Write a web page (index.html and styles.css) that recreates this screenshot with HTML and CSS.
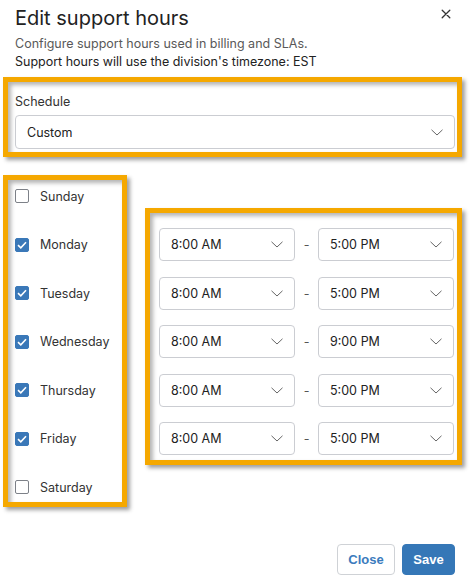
FILE: index.html
```html
<!DOCTYPE html>
<html lang="en">
<head>
<meta charset="utf-8">
<title>Edit support hours</title>
<link rel="stylesheet" href="styles.css">
</head>
<body>
<div class="dialog">
  <header class="dialog-header">
    <h1 class="dialog-title">Edit support hours</h1>
    <button class="close-btn" aria-label="Close">
      <svg width="10" height="10" viewBox="0 0 10 10"><path d="M1.2 1.2 L8.8 8.8 M8.8 1.2 L1.2 8.8" stroke="#333" stroke-width="1.3" fill="none" stroke-linecap="round"/></svg>
    </button>
  </header>
  <p class="dialog-desc"><span class="desc-muted">Configure support hours used in billing and SLAs.</span><br>Support hours will use the division's timezone: EST</p>

  <div class="field highlight hl-schedule">
    <div class="field-label">Schedule</div>
    <div class="select select-wide"><span>Custom</span><svg class="chev" width="12" height="7" viewBox="0 0 12 7"><path d="M0.5 0.8 L6 6 L11.5 0.8" stroke="#666" stroke-width="1" fill="none"/></svg></div>
  </div>

  <div class="hours">
    <div class="days highlight hl-days">
      <label class="day"><span class="cb"></span>Sunday</label>
      <label class="day"><span class="cb cb-on"><svg width="10" height="8" viewBox="0 0 10 8"><path d="M1 4.2 L3.8 6.8 L9 1.2" stroke="#fff" stroke-width="1.6" fill="none"/></svg></span>Monday</label>
      <label class="day"><span class="cb cb-on"><svg width="10" height="8" viewBox="0 0 10 8"><path d="M1 4.2 L3.8 6.8 L9 1.2" stroke="#fff" stroke-width="1.6" fill="none"/></svg></span>Tuesday</label>
      <label class="day"><span class="cb cb-on"><svg width="10" height="8" viewBox="0 0 10 8"><path d="M1 4.2 L3.8 6.8 L9 1.2" stroke="#fff" stroke-width="1.6" fill="none"/></svg></span>Wednesday</label>
      <label class="day"><span class="cb cb-on"><svg width="10" height="8" viewBox="0 0 10 8"><path d="M1 4.2 L3.8 6.8 L9 1.2" stroke="#fff" stroke-width="1.6" fill="none"/></svg></span>Thursday</label>
      <label class="day"><span class="cb cb-on"><svg width="10" height="8" viewBox="0 0 10 8"><path d="M1 4.2 L3.8 6.8 L9 1.2" stroke="#fff" stroke-width="1.6" fill="none"/></svg></span>Friday</label>
      <label class="day"><span class="cb"></span>Saturday</label>
    </div>

    <div class="times highlight hl-times">
      <div class="time-row">
        <div class="select select-time"><span>8:00 AM</span><svg class="chev" width="12" height="7" viewBox="0 0 12 7"><path d="M0.5 0.8 L6 6 L11.5 0.8" stroke="#666" stroke-width="1" fill="none"/></svg></div>
        <span class="dash">-</span>
        <div class="select select-time"><span>5:00 PM</span><svg class="chev" width="12" height="7" viewBox="0 0 12 7"><path d="M0.5 0.8 L6 6 L11.5 0.8" stroke="#666" stroke-width="1" fill="none"/></svg></div>
      </div>
      <div class="time-row">
        <div class="select select-time"><span>8:00 AM</span><svg class="chev" width="12" height="7" viewBox="0 0 12 7"><path d="M0.5 0.8 L6 6 L11.5 0.8" stroke="#666" stroke-width="1" fill="none"/></svg></div>
        <span class="dash">-</span>
        <div class="select select-time"><span>5:00 PM</span><svg class="chev" width="12" height="7" viewBox="0 0 12 7"><path d="M0.5 0.8 L6 6 L11.5 0.8" stroke="#666" stroke-width="1" fill="none"/></svg></div>
      </div>
      <div class="time-row">
        <div class="select select-time"><span>8:00 AM</span><svg class="chev" width="12" height="7" viewBox="0 0 12 7"><path d="M0.5 0.8 L6 6 L11.5 0.8" stroke="#666" stroke-width="1" fill="none"/></svg></div>
        <span class="dash">-</span>
        <div class="select select-time"><span>9:00 PM</span><svg class="chev" width="12" height="7" viewBox="0 0 12 7"><path d="M0.5 0.8 L6 6 L11.5 0.8" stroke="#666" stroke-width="1" fill="none"/></svg></div>
      </div>
      <div class="time-row">
        <div class="select select-time"><span>8:00 AM</span><svg class="chev" width="12" height="7" viewBox="0 0 12 7"><path d="M0.5 0.8 L6 6 L11.5 0.8" stroke="#666" stroke-width="1" fill="none"/></svg></div>
        <span class="dash">-</span>
        <div class="select select-time"><span>5:00 PM</span><svg class="chev" width="12" height="7" viewBox="0 0 12 7"><path d="M0.5 0.8 L6 6 L11.5 0.8" stroke="#666" stroke-width="1" fill="none"/></svg></div>
      </div>
      <div class="time-row">
        <div class="select select-time"><span>8:00 AM</span><svg class="chev" width="12" height="7" viewBox="0 0 12 7"><path d="M0.5 0.8 L6 6 L11.5 0.8" stroke="#666" stroke-width="1" fill="none"/></svg></div>
        <span class="dash">-</span>
        <div class="select select-time"><span>5:00 PM</span><svg class="chev" width="12" height="7" viewBox="0 0 12 7"><path d="M0.5 0.8 L6 6 L11.5 0.8" stroke="#666" stroke-width="1" fill="none"/></svg></div>
      </div>
    </div>
  </div>

  <footer class="dialog-footer">
    <button class="btn btn-default">Close</button>
    <button class="btn btn-primary">Save</button>
  </footer>
</div>
</body>
</html>
```

FILE: styles.css
```css
* { box-sizing: border-box; }

html, body {
  margin: 0;
  padding: 0;
  background: #fff;
}

body {
  font-family: Inter, "Noto Sans", "Liberation Sans", sans-serif;
  color: #333;
  width: 470px;
  height: 580px;
  overflow: hidden;
}

.dialog {
  padding: 0 15px;
}

.dialog-header {
  display: flex;
  justify-content: space-between;
  align-items: flex-start;
  padding-top: 6px;
  height: 30px;
}

.dialog-title {
  margin: 0;
  font-size: 20px;
  line-height: 24px;
  font-weight: 400;
  color: #222;
}

.close-btn {
  border: none;
  background: none;
  padding: 0;
  margin: 3px 4px 0 0;
  width: 10px;
  height: 10px;
  display: block;
}
.close-btn svg { display: block; }

.dialog-desc {
  margin: 5px 0 0;
  font-size: 12.5px;
  line-height: 18px;
  color: #222;
}
.desc-muted { color: #595959; }

.field {
  margin-top: 22px;
}

.field-label {
  font-size: 12.5px;
  line-height: 18px;
  color: #333;
  margin-bottom: 4px;
}

.select {
  display: flex;
  align-items: center;
  justify-content: space-between;
  border: 1px solid #cbcdd2;
  border-radius: 4px;
  background: #fff;
  font-size: 12.5px;
  color: #222;
  padding: 0 11px 0 11px;
}
.select .chev { display: block; flex: none; }

.select-wide { height: 34px; }

.hours {
  display: flex;
  align-items: flex-start;
  margin-top: 22.75px;
}

.days {
  width: 124px;
  display: flex;
  flex-direction: column;
}

.day {
  height: 48.5px;
  display: flex;
  align-items: center;
  gap: 11px;
  font-size: 12.5px;
  color: #333;
}

.cb {
  width: 14px;
  height: 14px;
  border: 1px solid #7d8188;
  border-radius: 2px;
  background: #fff;
  display: flex;
  align-items: center;
  justify-content: center;
  flex: none;
}
.cb-on {
  background: #3a78b8;
  border-color: #3a78b8;
}
.cb svg { display: block; }

.times {
  margin-left: 20px;
  margin-top: 48.5px;
}

.time-row {
  height: 48.5px;
  display: flex;
  align-items: center;
}

.select-time {
  width: 136px;
  height: 33px;
}

.dash {
  width: 23px;
  text-align: center;
  font-size: 12.5px;
  color: #555;
}

.dialog-footer {
  display: flex;
  justify-content: flex-end;
  gap: 7px;
  margin-top: 32.75px;
}

.btn {
  height: 31px;
  border-radius: 4px;
  font-family: "Liberation Sans", Arial, sans-serif;
  font-size: 13px;
  font-weight: 700;
  padding: 0;
  cursor: pointer;
}
.btn-default {
  width: 58px;
  background: #fff;
  border: 1px solid #cfd2d6;
  color: #3a7bbd;
}
.btn-primary {
  width: 53px;
  background: #3577b7;
  border: 1px solid #3577b7;
  color: #fff;
}

/* annotation highlight frames drawn over the screenshot content */
.highlight { position: relative; }
.highlight::after {
  content: "";
  position: absolute;
  border: 5px solid #f5a800;
  box-shadow: 3px 3px 4px rgba(0, 0, 0, 0.38), inset 3px 3px 4px rgba(0, 0, 0, 0.3);
  pointer-events: none;
}
.hl-schedule::after { top: -16px; left: -12px; right: -7px; bottom: -8px; }
.hl-days::after { top: 3.25px; left: -12px; right: 12px; bottom: 4.25px; }
.hl-times::after { top: -12.25px; left: -14px; right: -8px; bottom: -2.25px; }
```
